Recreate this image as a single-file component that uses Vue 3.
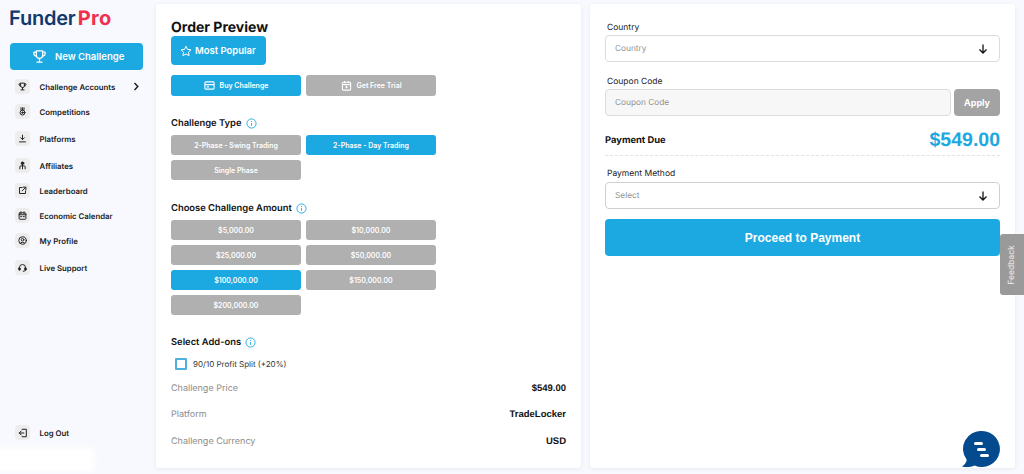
<script setup>
const navItems = [
  { label: "Challenge Accounts", icon: "trophy", arrow: true },
  { label: "Competitions", icon: "medal" },
  { label: "Platforms", icon: "download" },
  { label: "Affiliates", icon: "people" },
  { label: "Leaderboard", icon: "external" },
  { label: "Economic Calendar", icon: "calendar" },
  { label: "My Profile", icon: "profile" },
  { label: "Live Support", icon: "headset" },
];

const typeOptions = [
  { label: "2-Phase - Swing Trading" },
  { label: "2-Phase - Day Trading", active: true },
  { label: "Single Phase" },
];

const amounts = [
  { label: "$5,000.00" },
  { label: "$10,000.00" },
  { label: "$25,000.00" },
  { label: "$50,000.00" },
  { label: "$100,000.00", active: true },
  { label: "$150,000.00" },
  { label: "$200,000.00" },
];

const summary = [
  { label: "Challenge Price", value: "$549.00" },
  { label: "Platform", value: "TradeLocker" },
  { label: "Challenge Currency", value: "USD" },
];
</script>

<template>
  <div class="page">
    <aside class="sidebar">
      <div class="logo">Funder<span class="logo-red">Pro</span></div>
      <button class="new-btn">
        <svg width="15" height="15" viewBox="0 0 24 24" fill="none" stroke="#fff" stroke-width="2" stroke-linecap="round" stroke-linejoin="round">
          <path d="M7 3h10v7a5 5 0 0 1-10 0z" />
          <path d="M7 5H3v2a4 4 0 0 0 4 4M17 5h4v2a4 4 0 0 1-4 4M12 15v4M8 21h8" />
        </svg>
        New Challenge
      </button>
      <nav class="nav">
        <a v-for="item in navItems" :key="item.label" class="nav-item">
          <span class="nav-icon">
            <svg width="9" height="9" viewBox="0 0 24 24" fill="none" stroke="#222" stroke-width="2.6" stroke-linecap="round" stroke-linejoin="round">
              <template v-if="item.icon === 'trophy'">
                <path d="M7 3h10v7a5 5 0 0 1-10 0z" />
                <path d="M7 5H3v2a4 4 0 0 0 4 4M17 5h4v2a4 4 0 0 1-4 4M12 15v5M8 21h8" />
              </template>
              <template v-else-if="item.icon === 'medal'">
                <path d="M8 2v6M12 2v6M16 2v6" />
                <circle cx="12" cy="15" r="6.5" />
                <circle cx="12" cy="15" r="2" fill="#222" />
              </template>
              <template v-else-if="item.icon === 'download'">
                <path d="M12 3v12M7 10l5 5 5-5M4 21h16" />
              </template>
              <template v-else-if="item.icon === 'people'">
                <circle cx="12" cy="6" r="3.5" fill="#222" />
                <path d="M12 10v11M5 21v-6a2 2 0 0 1 2-2h10a2 2 0 0 1 2 2v6" />
              </template>
              <template v-else-if="item.icon === 'external'">
                <path d="M11 4H4v16h16v-7M14 3h7v7M21 3L11 13" />
              </template>
              <template v-else-if="item.icon === 'calendar'">
                <rect x="3" y="5" width="18" height="17" rx="2" />
                <path d="M8 2v5M16 2v5M3 10h18" />
                <path d="M7 15h3M14 15h3" />
              </template>
              <template v-else-if="item.icon === 'profile'">
                <circle cx="12" cy="12" r="10" />
                <circle cx="12" cy="10" r="3.5" />
                <path d="M6 19c1.5-3 10.500-3 12 0" />
              </template>
              <template v-else>
                <path d="M4 15v-3a8 8 0 0 1 16 0v3" />
                <rect x="2" y="13" width="4" height="6" rx="1" fill="#222" />
                <rect x="18" y="13" width="4" height="6" rx="1" fill="#222" />
                <path d="M20 19c0 2-2 3-6 3" />
              </template>
            </svg>
          </span>
          <span class="nav-label">{{ item.label }}</span>
          <svg v-if="item.arrow" class="nav-arrow" width="7" height="9" viewBox="0 0 7 9" fill="none" stroke="#222" stroke-width="1.500">
            <path d="M1.500 1l3.300 3.500-3.300 3.500" />
          </svg>
        </a>
      </nav>
      <a class="nav-item logout">
        <span class="nav-icon">
          <svg width="10" height="10" viewBox="0 0 24 24" fill="none" stroke="#222" stroke-width="2.400" stroke-linecap="round" stroke-linejoin="round">
            <path d="M10 3h10v18H10M3 12h11M8 7l-5 5 5 5" />
          </svg>
        </span>
        <span class="nav-label">Log Out</span>
      </a>
      <div class="smear"></div>
    </aside>

    <section class="card order">
      <h1 class="title">Order Preview</h1>
      <button class="popular">
        <svg width="12" height="12" viewBox="0 0 24 24" fill="none" stroke="#fff" stroke-width="2" stroke-linejoin="round">
          <path d="M12 2.500l3 6.300 6.900.9-5 4.800 1.300 6.900-6.200-3.400-6.200 3.400 1.300-6.900-5-4.800 6.900-.9z" />
        </svg>
        Most Popular
      </button>

      <div class="options top-options">
        <button class="opt active">
          <svg width="11" height="11" viewBox="0 0 24 24" fill="none" stroke="#fff" stroke-width="2.400">
            <rect x="2" y="4" width="20" height="16" rx="2" />
            <path d="M2 10h20M6 15h5" />
          </svg>
          Buy Challenge
        </button>
        <button class="opt">
          <svg width="11" height="11" viewBox="0 0 24 24" fill="none" stroke="#fff" stroke-width="2.400">
            <rect x="3" y="5" width="18" height="17" rx="2" />
            <path d="M8 2v5M16 2v5M3 10h18M12 13v5M9.500 15.500h5" />
          </svg>
          Get Free Trial
        </button>
      </div>

      <h2 class="sec-title type-title">
        Challenge Type
        <svg class="info" width="11" height="11" viewBox="0 0 12 12" fill="none" stroke="#1ca8e0">
          <circle cx="6" cy="6" r="5" />
          <path d="M6 5.500v3M6 3.300v1" />
        </svg>
      </h2>
      <div class="options">
        <button v-for="opt in typeOptions" :key="opt.label" class="opt" :class="{ active: opt.active }">{{ opt.label }}</button>
      </div>

      <h2 class="sec-title amount-title">
        Choose Challenge Amount
        <svg class="info" width="11" height="11" viewBox="0 0 12 12" fill="none" stroke="#1ca8e0">
          <circle cx="6" cy="6" r="5" />
          <path d="M6 5.500v3M6 3.300v1" />
        </svg>
      </h2>
      <div class="options">
        <button v-for="opt in amounts" :key="opt.label" class="opt" :class="{ active: opt.active }">{{ opt.label }}</button>
      </div>

      <h2 class="sec-title addon-title">
        Select Add-ons
        <svg class="info" width="11" height="11" viewBox="0 0 12 12" fill="none" stroke="#1ca8e0">
          <circle cx="6" cy="6" r="5" />
          <path d="M6 5.500v3M6 3.300v1" />
        </svg>
      </h2>
      <label class="addon">
        <span class="checkbox"></span>
        90/10 Profit Split (+20%)
      </label>

      <div class="summary">
        <div v-for="row in summary" :key="row.label" class="summary-row">
          <span class="summary-label">{{ row.label }}</span>
          <span class="summary-value">{{ row.value }}</span>
        </div>
      </div>
    </section>

    <section class="card payment">
      <div class="field-label">Country</div>
      <div class="field">
        Country
        <svg width="10" height="10" viewBox="0 0 10 10" fill="none" stroke="#111" stroke-width="1.300">
          <path d="M5 .5v8.500M1.500 5.500L5 9l3.500-3.500" />
        </svg>
      </div>
      <div class="field-label coupon-label">Coupon Code</div>
      <div class="coupon-row">
        <div class="field coupon">Coupon Code</div>
        <button class="apply">Apply</button>
      </div>
      <div class="due">
        <span class="due-label">Payment Due</span>
        <span class="due-value">$549.00</span>
      </div>
      <div class="field-label method-label">Payment Method</div>
      <div class="field dark-border">
        Select
        <svg width="10" height="10" viewBox="0 0 10 10" fill="none" stroke="#111" stroke-width="1.300">
          <path d="M5 .5v8.500M1.500 5.500L5 9l3.500-3.500" />
        </svg>
      </div>
      <button class="proceed">Proceed to Payment</button>
    </section>

    <div class="feedback"><span>Feedback</span></div>

    <svg class="chat" width="38" height="37" viewBox="0 0 38 37">
      <path d="M20 0a18 18 0 1 1-7.500 34.400C9 36 4 36.500 0 35.500c2.500-1.500 4-3.500 4.800-6.500A18 18 0 0 1 20 0z" fill="#034a8f" />
      <rect x="12" y="11" width="9" height="3" rx="1.500" fill="#fff" />
      <rect x="15" y="17" width="9" height="3" rx="1.500" fill="#fff" />
      <rect x="18" y="23" width="9" height="3" rx="1.500" fill="#fff" />
    </svg>
  </div>
</template>

<style>
html,
body {
  margin: 0;
  background: #f8f9fe;
}
</style>

<style scoped>
.page {
  position: relative;
  display: flex;
  width: 1024px;
  height: 474px;
  overflow: hidden;
  box-sizing: border-box;
  padding: 4px 9px 6px 0;
  background: #f8f9fe;
  font-family: Inter, "Liberation Sans", sans-serif;
  text-rendering: geometricPrecision;
  color: #111;
}
button {
  font-family: inherit;
  border: none;
  color: #fff;
}
.sidebar {
  position: relative;
  display: flex;
  flex-direction: column;
  flex: 0 0 156px;
  width: 156px;
}
.logo {
  margin: 3px 0 0 9px;
  height: 24px;
  font-size: 20px;
  line-height: 23px;
  font-weight: 600;
  letter-spacing: -0.2px;
  color: #11386d;
}
.logo-red {
  margin-left: 2px;
  font-weight: 700;
  letter-spacing: 0.4px;
  color: #f0304c;
}
.new-btn {
  display: flex;
  align-items: center;
  gap: 8px;
  margin: 12px 13px 0 10px;
  height: 27px;
  padding: 0 0 0 22px;
  background: #1ca8e0;
  border-radius: 4px;
  font-size: 9.500px;
  font-weight: 600;
}
.nav {
  display: flex;
  flex-direction: column;
  margin-top: 4px;
}
.nav-item {
  display: flex;
  align-items: center;
  height: 25px;
  padding-left: 15px;
  font-size: 7.800px;
  font-weight: 600;
  color: #1a1a1a;
}
.nav .nav-item:nth-child(3),
.nav .nav-item:nth-child(4),
.nav .nav-item:nth-child(8) {
  margin-top: 2px;
}
.nav-icon {
  display: flex;
  align-items: center;
  justify-content: center;
  flex: 0 0 15px;
  width: 15px;
  height: 15px;
  border-radius: 4px;
  background: #ededed;
}
.nav-label {
  margin-left: 9.500px;
}
.nav-arrow {
  margin-left: auto;
  margin-right: 16px;
}
.logout {
  margin-top: auto;
  margin-bottom: 23px;
}
.smear {
  position: absolute;
  left: -4px;
  bottom: -4px;
  width: 98px;
  height: 24px;
  background: #fff;
  filter: blur(3px);
}
.card {
  box-sizing: border-box;
  height: 464px;
  background: #fff;
  border-radius: 3px;
  box-shadow: 0 1px 4px rgba(40, 50, 90, 0.08);
}
.order {
  flex: 0 0 425px;
  margin-right: 9px;
  padding: 16px 15px 0;
}
.payment {
  flex: 0 0 425px;
  padding: 15px 15px 0;
}
.title {
  margin: 0;
  font-size: 14px;
  line-height: 16px;
  font-weight: 700;
}
.popular {
  display: flex;
  align-items: center;
  gap: 3px;
  width: 95px;
  height: 29px;
  padding: 0 0 0 9px;
  background: #1ca8e0;
  border-radius: 4px;
  font-size: 9.500px;
  font-weight: 600;
}
.options {
  display: grid;
  grid-template-columns: 130px 130px;
  gap: 5px;
}
.top-options {
  margin-top: 10px;
}
.opt {
  display: flex;
  align-items: center;
  justify-content: center;
  gap: 5px;
  height: 20px;
  padding: 0;
  background: #b0b0b0;
  border-radius: 3px;
  font-size: 7px;
  font-weight: 600;
}
.top-options .opt {
  height: 21px;
}
.opt.active {
  background: #1ca8e0;
}
.sec-title {
  display: flex;
  align-items: center;
  gap: 4px;
  box-sizing: border-box;
  margin: 0 0 6px;
  height: 14px;
  padding-top: 2px;
  font-size: 9.400px;
  font-weight: 600;
}
.type-title {
  margin-top: 19px;
}
.amount-title {
  margin-top: 20px;
}
.addon-title {
  margin-top: 19px;
}
.addon {
  display: flex;
  align-items: center;
  gap: 6px;
  margin: 9px 0 0 4px;
  height: 14px;
  font-size: 8px;
  color: #333;
}
.checkbox {
  box-sizing: border-box;
  width: 12px;
  height: 12px;
  border: 2px solid #4fb0e0;
  border-radius: 1px;
}
.summary {
  margin-top: 4px;
}
.summary-row {
  display: flex;
  justify-content: space-between;
  align-items: center;
  height: 26.500px;
  font-size: 9px;
}
.summary-label {
  color: #8c8c8c;
}
.summary-value {
  font-family: "Liberation Sans", sans-serif;
  font-size: 9.500px;
  font-weight: 700;
  color: #111;
}
.field-label {
  height: 16px;
  padding-left: 2px;
  font-size: 8.500px;
  line-height: 18px;
  color: #222;
}
.coupon-label {
  margin-top: 11px;
}
.method-label {
  margin-top: 9px;
  height: 17px;
  line-height: 19px;
}
.field {
  display: flex;
  align-items: center;
  justify-content: space-between;
  box-sizing: border-box;
  height: 27px;
  padding: 1px 11px 0 9px;
  background: #fff;
  border: 1px solid #dcdcdc;
  border-radius: 4px;
  font-size: 8.300px;
  color: #8f8f8f;
}
.dark-border {
  border-color: #d0d0d0;
}
.coupon-row {
  display: flex;
  gap: 3px;
}
.coupon {
  flex: 1;
  background: #f7f7f7;
}
.apply {
  flex: 0 0 46px;
  height: 27px;
  padding: 0;
  background: #a3a3a3;
  border-radius: 4px;
  font-size: 9px;
  font-weight: 700;
}
.due {
  display: flex;
  align-items: center;
  justify-content: space-between;
  margin-top: 9px;
  height: 30px;
  border-bottom: 1px dashed #e2e2e2;
}
.due-label {
  font-size: 9.400px;
  font-weight: 700;
}
.due-value {
  font-family: "Liberation Sans", sans-serif;
  font-size: 19.500px;
  font-weight: 700;
  color: #1ca8e0;
}
.proceed {
  display: block;
  width: 100%;
  height: 37px;
  margin-top: 10px;
  padding: 0;
  background: #1ca8e0;
  border-radius: 4px;
  font-family: "Liberation Sans", sans-serif;
  font-size: 12px;
  font-weight: 700;
}
.feedback {
  position: absolute;
  right: 0;
  top: 234px;
  display: flex;
  align-items: center;
  justify-content: center;
  width: 24px;
  height: 61px;
  background: #9a9a9a;
  border-radius: 3px 0 0 3px;
  font-size: 8.500px;
  color: #eee;
}
.feedback span {
  transform: rotate(-90deg);
}
.chat {
  position: absolute;
  left: 962px;
  top: 431px;
}
</style>
